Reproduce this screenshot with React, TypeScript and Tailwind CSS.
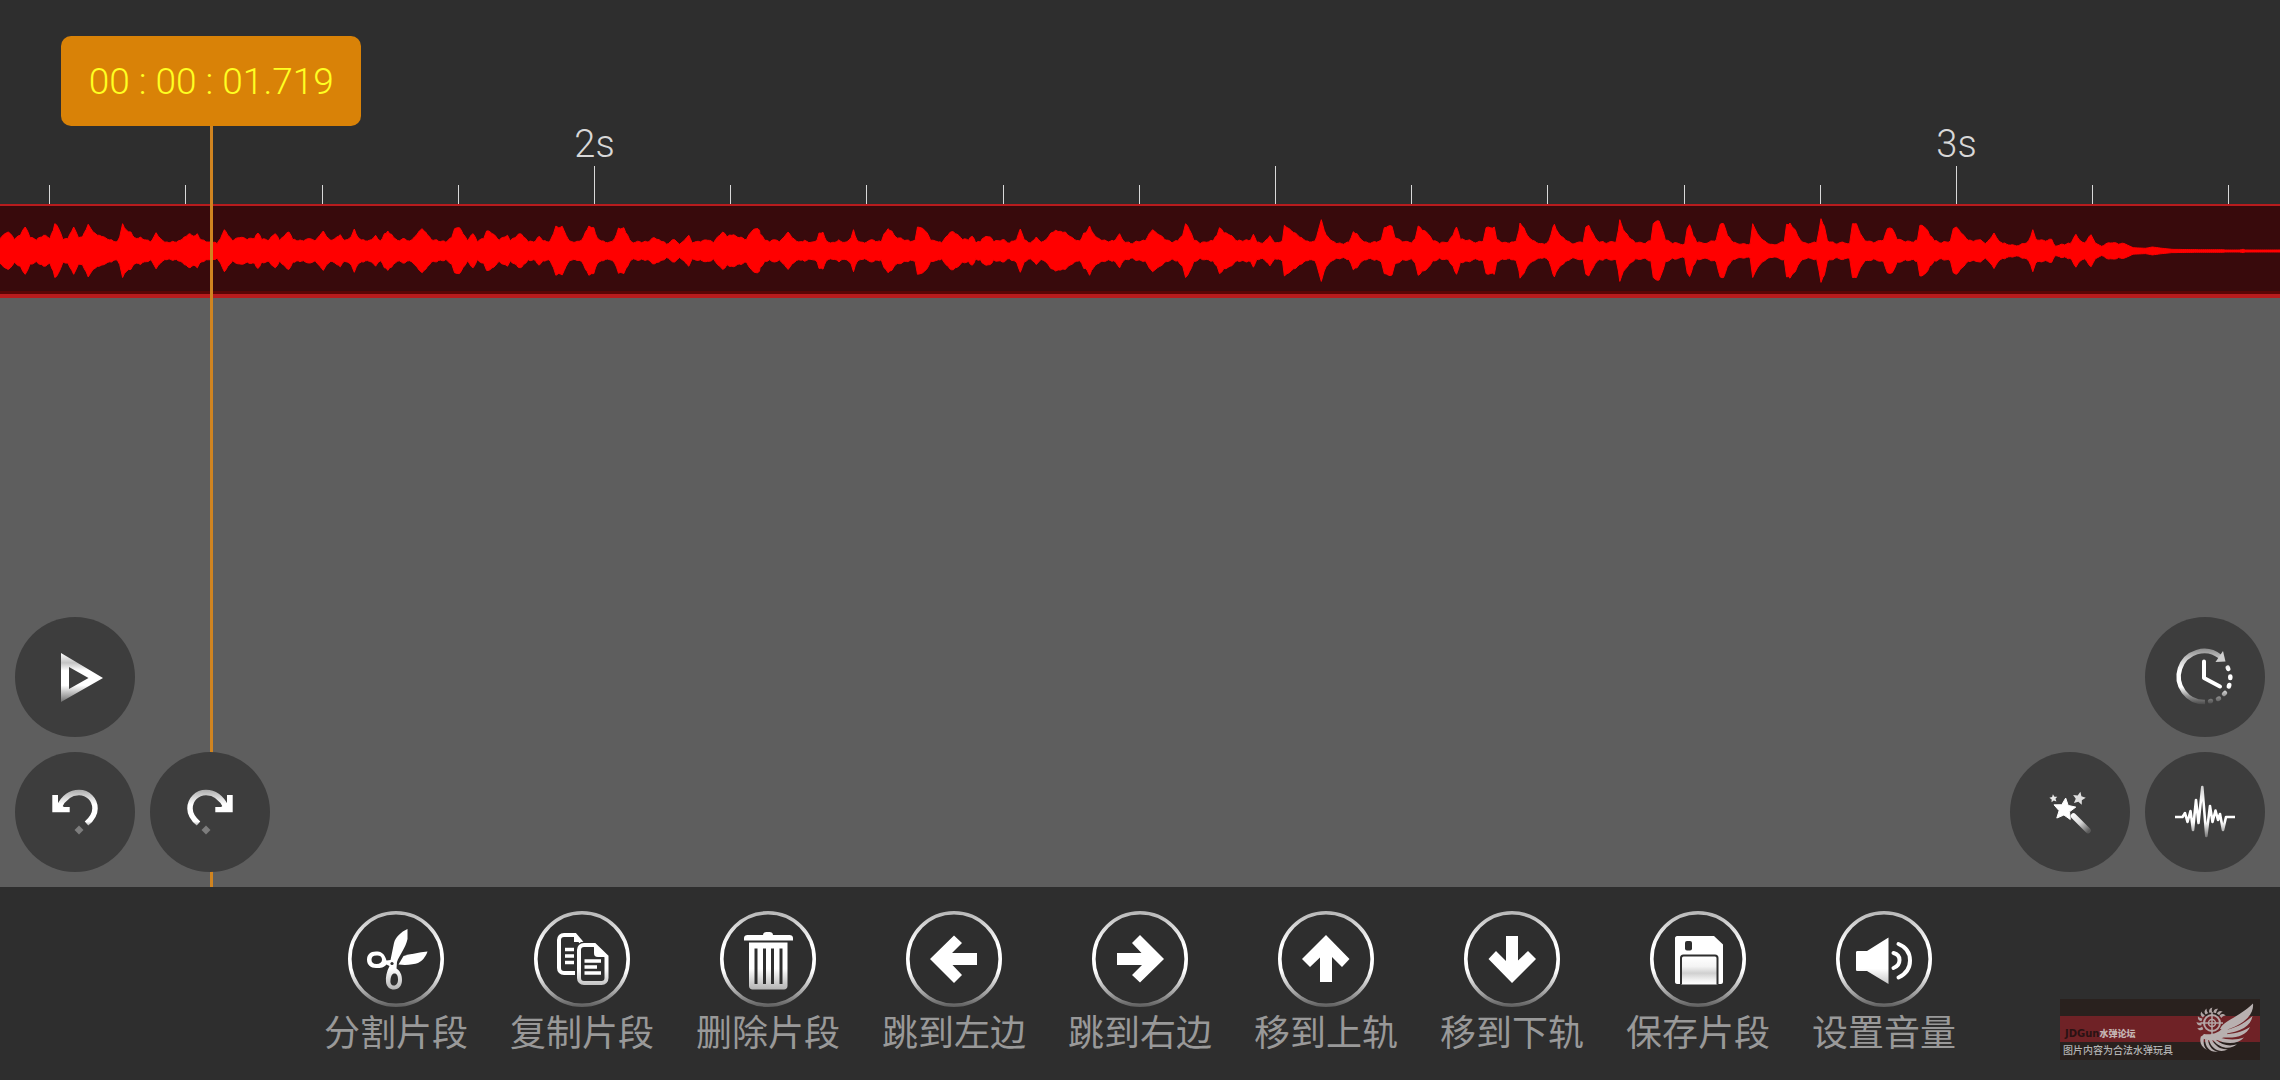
import type { ReactNode } from "react";

const PX_PER_SECOND = 1362;
const VIEW_START = 1.5635;
const VIEW_SPAN = 2280 / PX_PER_SECOND;

const leftOf = (seconds: number) => `${((seconds - VIEW_START) / VIEW_SPAN) * 100}%`;

const TICKS = Array.from({ length: 17 }, (_, i) => 16 + i);

/* Envelope samples in three runs: [x, y] pairs on a 1568-wide strip, zero line at y = 212. */
const RUNS: number[][] = [
  [0,175,17,155,30,178,42,165,52,140,62,172,75,180,90,165,103,175,110,150,113,130,120,142,130,178,140,175,152,140,162,172,170,170,182,132,192,155,205,165,215,170,230,178,240,185,247,170,253,130,260,148,270,155,278,172,290,170,310,185,322,157,335,180,345,185,360,185,372,180,380,170,392,160,400,168,407,160,412,175,425,185,435,185,448,190,455,175,463,148,470,165,480,182,495,172,510,178,525,175,532,158,540,178,555,180,568,160,577,182,588,165,596,155,604,178,615,182,630,178,640,175,650,182,660,165,667,152,674,170,685,180,695,170,702,163,710,180,725,168,731,146,738,170,750,178,762,180,775,165,785,182,793,160,800,152,808,162,820,180,835,175,845,182,855,170,865,152,871,145,878,155,890,178,905,183,920,186,932,172,938,145,948,142,955,160,965,182,976,160,985,185,998,175,1004,152,1015,160,1030,180,1042,170,1047,165,1053,182,1065,170,1073,160,1080,170,1090,185,1105,182,1112,168,1120,182,1135,182,1142,160,1147,137,1153,143,1160,138,1168,165,1175,182,1190,183,1200,180,1208,155,1215,137,1225,142,1232,172,1245,182,1258,185,1268,175,1276,143,1287,142,1295,165,1303,185,1320,184,1335,185,1350,172,1360,178,1375,192,1392,178,1402,192,1412,180,1421,165,1428,188,1445,185,1460,180,1472,188,1485,165,1491,155,1500,170,1510,165,1525,172,1540,178,1550,155,1560,145,1567,150],
  [0,160,10,180,20,185,30,178,40,185,50,170,58,155,66,172,80,185,92,180,105,186,118,178,122,158,130,156,137,182,150,186,163,178,175,186,188,172,193,148,200,178,212,186,235,180,250,185,256,160,264,145,272,152,280,170,295,178,310,184,320,180,325,140,335,144,345,158,352,180,362,182,368,185,375,188,388,165,395,154,403,160,418,178,430,180,438,168,445,188,455,185,462,172,475,170,482,185,500,178,515,188,530,175,537,146,545,178,558,188,570,170,580,186,590,178,600,158,610,150,620,153,630,155,645,172,660,182,668,158,675,152,680,137,688,160,700,175,715,182,730,182,742,160,750,182,765,190,780,184,795,182,803,160,810,148,820,160,835,178,850,188,862,182,872,165,878,130,886,148,895,180,908,190,925,185,935,182,943,165,948,142,957,158,970,165,985,182,1000,180,1012,180,1018,162,1025,186,1040,186,1052,166,1062,188,1078,180,1082,135,1092,145,1105,158,1118,172,1130,182,1145,182,1152,150,1158,118,1164,150,1172,170,1185,185,1200,190,1215,186,1224,154,1232,160,1242,180,1255,188,1272,186,1282,178,1288,142,1304,138,1310,172,1325,185,1345,188,1352,175,1358,137,1366,150,1378,160,1388,182,1402,190,1420,186,1430,165,1437,140,1445,178,1460,180,1480,186,1492,183,1498,142,1515,140,1520,178,1535,186,1550,185,1560,183,1566,150],
  [0,128,8,142,15,165,30,182,50,192,60,180,68,140,71,132,78,155,90,172,105,188,130,188,136,140,142,135,150,158,160,182,175,188,198,186,203,150,206,118,213,148,225,172,238,188,258,190,270,182,275,130,287,122,293,145,300,180,315,190,340,190,345,145,350,133,357,165,365,188,390,186,405,178,413,132,420,130,428,165,440,186,460,190,475,190,480,130,490,160,505,182,520,192,545,186,550,132,557,128,568,148,578,178,590,188,612,188,617,150,621,115,628,138,634,180,650,190,670,188,680,190,686,130,694,130,702,160,712,182,730,188,750,180,758,145,768,145,778,178,795,185,812,186,820,180,825,135,838,145,845,165,855,182,870,188,888,182,894,145,900,140,912,160,925,180,940,180,950,178,960,190,970,175,978,158,988,182,1000,188,1020,195,1040,190,1050,180,1058,148,1064,175,1080,180,1097,177,1105,198,1120,192,1135,190,1147,162,1155,180,1165,188,1178,163,1187,188,1200,198,1218,188,1235,192,1250,192,1265,202,1290,204,1305,200,1325,204,1345,207,1400,208,1450,208,1460,211,1480,210,1492,207,1500,211,1568,211],
];

function buildWaveform() {
  const pts: [number, number][] = [];
  RUNS.forEach((run, r) => {
    for (let i = 0; i < run.length; i += 2) {
      pts.push([r * 760 + (run[i] * 760) / 1568, (212 - run[i + 1]) / 3]);
    }
  });
  // Fill the gaps between samples with a fine ripple, as in a real recording.
  const dense: [number, number][] = [];
  for (let i = 0; i < pts.length - 1; i++) {
    const [x0, h0] = pts[i];
    const [x1, h1] = pts[i + 1];
    const steps = Math.max(1, Math.round((x1 - x0) / 2));
    for (let s = 0; s < steps; s++) {
      const t = s / steps;
      const h = h0 + (h1 - h0) * t;
      const ripple = s === 0 || h < 6 ? 0 : Math.sin((x0 + s * 2) * 12.9898) * 1.1;
      dense.push([x0 + (x1 - x0) * t, Math.max(1, h + ripple)]);
    }
  }
  dense.push([2280, 1]);
  const top = dense.map(([x, h]) => `${x.toFixed(1)} ${(45 - h).toFixed(1)}`);
  const bottom = [...dense].reverse().map(([x, h]) => `${x.toFixed(1)} ${(45 + h * 0.97).toFixed(1)}`);
  return `M${top.join("L")}L${bottom.join("L")}Z`;
}

const WAVEFORM = buildWaveform();

function starPath(cx: number, cy: number, r: number, turn: number) {
  const p = Array.from({ length: 10 }, (_, i) => {
    const a = ((i * 36 - 90 + turn) * Math.PI) / 180;
    const d = i % 2 ? r * 0.48 : r;
    return `${(cx + d * Math.cos(a)).toFixed(2)} ${(cy + d * Math.sin(a)).toFixed(2)}`;
  });
  return `M${p.join("L")}Z`;
}

function Gradients() {
  return (
    <svg className="absolute size-0" aria-hidden="true">
      <defs>
        <linearGradient id="ring" x1="0" y1="0" x2="0" y2="96" gradientUnits="userSpaceOnUse">
          <stop offset="0" stopColor="#b4b4b4" />
          <stop offset="0.12" stopColor="#cfcfcf" />
          <stop offset="0.35" stopColor="#ffffff" />
          <stop offset="0.62" stopColor="#ffffff" />
          <stop offset="0.86" stopColor="#a0a0a0" />
          <stop offset="1" stopColor="#5c5c5c" />
        </linearGradient>
        <linearGradient id="glyph" x1="0" y1="20" x2="0" y2="78" gradientUnits="userSpaceOnUse">
          <stop offset="0" stopColor="#ffffff" />
          <stop offset="0.65" stopColor="#ffffff" />
          <stop offset="1" stopColor="#b4b4b4" />
        </linearGradient>
        <linearGradient id="play" x1="0" y1="36" x2="0" y2="85" gradientUnits="userSpaceOnUse">
          <stop offset="0" stopColor="#ffffff" />
          <stop offset="0.2" stopColor="#c4c4c4" />
          <stop offset="0.36" stopColor="#ffffff" />
          <stop offset="0.66" stopColor="#ffffff" />
          <stop offset="1" stopColor="#6e6e6e" />
        </linearGradient>
        <linearGradient id="turn" x1="0" y1="37" x2="0" y2="82" gradientUnits="userSpaceOnUse">
          <stop offset="0" stopColor="#a8a8a8" />
          <stop offset="0.14" stopColor="#cccccc" />
          <stop offset="0.34" stopColor="#ffffff" />
          <stop offset="0.72" stopColor="#ffffff" />
          <stop offset="0.84" stopColor="#9a9a9a" />
          <stop offset="1" stopColor="#707070" />
        </linearGradient>
        <linearGradient id="clock" x1="0" y1="32" x2="0" y2="88" gradientUnits="userSpaceOnUse">
          <stop offset="0" stopColor="#8f8f8f" />
          <stop offset="0.2" stopColor="#cfcfcf" />
          <stop offset="0.38" stopColor="#ffffff" />
          <stop offset="0.68" stopColor="#ffffff" />
          <stop offset="0.85" stopColor="#8c8c8c" />
          <stop offset="1" stopColor="#444444" />
        </linearGradient>
        <linearGradient id="handle" x1="62" y1="62" x2="79" y2="79" gradientUnits="userSpaceOnUse">
          <stop offset="0" stopColor="#ffffff" />
          <stop offset="0.5" stopColor="#d8d8d8" />
          <stop offset="1" stopColor="#5a5a5a" />
        </linearGradient>
        <linearGradient id="pulse" x1="0" y1="35" x2="0" y2="85" gradientUnits="userSpaceOnUse">
          <stop offset="0" stopColor="#cfcfcf" />
          <stop offset="0.3" stopColor="#ffffff" />
          <stop offset="0.7" stopColor="#ffffff" />
          <stop offset="1" stopColor="#777777" />
        </linearGradient>
        <linearGradient id="label" x1="0" y1="46" x2="0" y2="73" gradientUnits="userSpaceOnUse">
          <stop offset="0" stopColor="#ffffff" />
          <stop offset="0.35" stopColor="#f4f4f4" />
          <stop offset="0.6" stopColor="#d0d0d0" />
          <stop offset="0.85" stopColor="#f2f2f2" />
          <stop offset="1" stopColor="#ffffff" />
        </linearGradient>
      </defs>
    </svg>
  );
}

function RoundButton({ name, children }: { name: string; children: ReactNode }) {
  return (
    <button type="button" aria-label={name} className="size-[120px] cursor-pointer rounded-full bg-[#3d3d3d]">
      <svg viewBox="0 0 120 120" className="size-full" fill="none" aria-hidden="true">
        {children}
      </svg>
    </button>
  );
}

const undoShape = (
  <>
    <path d="M44 55C49 45 56 40.500 64 40.500C73 40.500 80 47.500 80 56.500C80 62 77.500 66.500 71.500 71.500" stroke="url(#turn)" strokeWidth="5.500" />
    <path d="M37.300 43H43V51L49 55H54.700V60.200H37.300Z" fill="#fff" />
    <path d="M64 73.500L68.500 78L64 82.500L59.500 78Z" fill="#7d7d7d" />
  </>
);

const arrowShape = <path d="M24 48L48 24.500L56 32L46 42H71V54H46.500L56 64L48 72Z" fill="#fff" />;

const TOOLS: { label: string; icon: ReactNode }[] = [
  {
    label: "分割片段",
    icon: (
      <>
        <path
          d="M59.500 18C53 21 47.500 26 46 32L42.500 49L38.500 49.500C36.500 42 32.500 40.500 28 40.500C22 40.500 19 44 19 48.500C19 54 22.500 57 28 57C33 57 36 56.500 38.500 53.500L41.500 55C38.500 61 37.500 66 38 71C38.500 76 42 78.500 46 78.500C51 78.500 54 74.500 54 69C54 63.500 52 60 48.500 57.500L49 51C51 45 58 36 59.500 28ZM28.500 44.500C32.500 44.500 34 46 34 48.800C34 51.500 32 53 28.500 53C25 53 23.500 51.500 23.500 48.800C23.500 46 25 44.500 28.500 44.500ZM46.500 62.500C49 62.500 50 65 50 68.500C50 72 48.500 74.500 46 74.500C43.500 74.500 42 72.500 42.500 69C43 65 44 62.500 46.500 62.500Z"
          fill="url(#glyph)"
          fillRule="evenodd"
        />
        <path d="M79.500 40.500C71 41.500 62 43 55.500 45L50.500 53.500C58 54.500 66 53.500 70 52C74.500 50 78 45 79.500 40.500Z" fill="#fff" />
        <circle cx="44" cy="52.500" r="1.600" fill="#2e2e2e" />
      </>
    ),
  },
  {
    label: "复制片段",
    icon: (
      <>
        <path d="M41 62H30C27 62 25 60 25 57V29C25 26 27 24 30 24H41L47 31" stroke="#fff" strokeWidth="4" />
        <path d="M40 22L49.500 31H40Z" fill="#fff" />
        <path d="M31 38.500H40M31 45H40M31 51.500H40" stroke="#fff" strokeWidth="3.500" />
        <path d="M50 34H60.500L72.500 45.500V67C72.500 70 70.500 72 67.500 72H50C47 72 45 70 45 67V39C45 36 47 34 50 34Z" stroke="url(#glyph)" strokeWidth="4" />
        <path d="M60 33L74 46H64C61 46 60 44.500 60 42Z" fill="#fff" />
        <path d="M50.500 50H67M50.500 56H63M50.500 62H67" stroke="#fff" strokeWidth="3.500" />
      </>
    ),
  },
  {
    label: "删除片段",
    icon: (
      <>
        <path d="M24 29.500V27C24 25 25.500 24 27.500 24H43C43 22 44.500 21 46.500 21H49.500C51.500 21 53 22 53 24H69.500C71.500 24 73 25 73 27V29.500Z" fill="#fff" />
        <path
          d="M29 31.500H67.500V75C67.500 77 66 78.500 64 78.500H32.500C30.500 78.500 29 77 29 75ZM34.500 37.500V73H37.500V37.500ZM43 37.500V73H46V37.500ZM51 37.500V73H54V37.500ZM59.500 37.500V73H62.500V37.500Z"
          fill="url(#glyph)"
          fillRule="evenodd"
        />
      </>
    ),
  },
  { label: "跳到左边", icon: arrowShape },
  { label: "跳到右边", icon: <g transform="rotate(180 48 48)">{arrowShape}</g> },
  { label: "移到上轨", icon: <g transform="rotate(90 48 48)">{arrowShape}</g> },
  { label: "移到下轨", icon: <g transform="rotate(-90 48 48)">{arrowShape}</g> },
  {
    label: "保存片段",
    icon: (
      <>
        <path d="M27 25H64L73 33.500V71C73 72 72 73 71 73H27C26 73 25 72 25 71V27C25 26 26 25 27 25Z" fill="#fff" />
        <rect x="35" y="30" width="7" height="9.500" rx="2" fill="#2e2e2e" />
        <path d="M31 73.500V47C31 45.500 32 44.500 33.500 44.500H65C66.500 44.500 67.500 45.500 67.500 47V73.500" fill="url(#label)" stroke="#2e2e2e" strokeWidth="2" />
      </>
    ),
  },
  {
    label: "设置音量",
    icon: (
      <>
        <path d="M21.500 40H31L52.500 26.500V73L31 60H21.500C20.500 60 20 59.500 20 58.500V41.500C20 40.500 20.500 40 21.500 40Z" fill="url(#glyph)" />
        <path d="M57.500 42C61.500 43 63.500 45.500 63.500 49C63.500 52.500 61.500 55.500 57.500 57" stroke="#fff" strokeWidth="4" strokeLinecap="round" />
        <path d="M62.500 33C70 36 74 42 74 49.500C74 57 70 63 62.500 66.500" stroke="#fff" strokeWidth="4" strokeLinecap="round" />
      </>
    ),
  },
];

function Ruler() {
  return (
    <div className="relative h-[204px] w-full overflow-hidden">
      {TICKS.map((n) => (
        <div
          key={n}
          className="absolute bottom-0 flex w-0 flex-col items-center"
          style={{ left: leftOf(n / 10) }}
        >
          {n % 10 === 0 && <span className="text-[38px] leading-[44px] font-[350] whitespace-nowrap text-[#d8d8d8]">{n / 10}s</span>}
          <span className={n % 5 === 0 ? "h-[38px] w-px bg-[#d8d8d8]" : "h-[19px] w-px bg-[#d8d8d8]"} />
        </div>
      ))}
    </div>
  );
}

function Track() {
  return (
    <div className="h-[94px] w-full border-t-2 border-b-4 border-[#b81c1e] bg-[#380a0c]">
      <svg viewBox="0 0 2280 88" preserveAspectRatio="none" className="block h-full w-full" aria-label="音频波形">
        <path d={WAVEFORM} fill="#ff0000" stroke="#ff0000" strokeWidth="1" />
        <path d="M0 86.500H2280" stroke="#5a0606" strokeWidth="3" />
      </svg>
    </div>
  );
}

function Playhead() {
  return (
    <div
      className="pointer-events-none absolute top-9 bottom-0 flex w-0 flex-col items-center"
      style={{ left: leftOf(1.7186) }}
    >
      <div className="flex h-[90px] w-[300px] shrink-0 items-center justify-center rounded-[10px] bg-[#d98207] pt-0.5">
        <time className="text-[37px] leading-[44px] font-[350] whitespace-nowrap text-[#ffff22]">00 : 00 : 01.719</time>
      </div>
      <div className="w-[3px] flex-1 bg-[#d08420]" />
    </div>
  );
}

const FEATHERS = [
  "M160 30C164 21 178 19 193 4.500C194 13 188 24 166 31Z",
  "M163 32C175 29 184 25 192.500 17C191 27 181 33 163 35Z",
  "M162 35.500C174 35 182 33 190 28C186 37 175 40 160 38Z",
  "M159 38.500C168 41 177 41 184 38.500C178 45 167 46 156 40.500Z",
  "M156 41C162 46 170 48 177 45C171 51 160 50 153 41Z",
  "M152 41C156 48 162 51 168 50C162 54 152 52 149 41Z",
  "M148 41C149 48 153 52 158 52.500C151 54 145 49 145 40Z",
  "M144 39C143 44 144 48 147 51C141 48 139 43 141 37Z",
];

const WING_BODY = "M164 27C160 34 152 36 144 35L141 38C146 43 158 43 167 36L168 29Z";

/* Curved teeth round the left and top of the target, in degrees. */
const TEETH = [-115, -92, -70, -48, -26, -4, 18, 38, 56];

function Watermark() {
  return (
    <div className="absolute right-5 bottom-5 flex h-[61px] w-[200px] flex-col bg-[#29211e]">
      <div className="mt-[17px] flex h-[26px] items-end bg-[#6f2226] pb-px pl-[5px] text-[9px] leading-[14px]">
        <span className="font-['DejaVu_Sans'] text-[10px] font-bold text-[#2a1213]">JDGun</span>
        <span className="font-black text-[#c4b4b2]">水弹论坛</span>
      </div>
      <p className="pl-[3px] text-[10px] leading-[17px] font-medium whitespace-nowrap text-[#b4b4b4]">图片内容为合法水弹玩具</p>
      <svg viewBox="0 0 200 61" className="absolute inset-0 size-full" fill="none" aria-hidden="true">
        <g stroke="#b4a6a6">
          <circle cx="152" cy="24" r="8" strokeWidth="2" />
          <circle cx="152" cy="24" r="3.500" strokeWidth="1.500" />
          <path d="M152 13V35M141 24H163" strokeWidth="1.500" />
        </g>
        <g fill="#b0a4a4">
          {TEETH.map((a) => (
            <path key={a} d="M150 13.500C149.500 11 150.500 9 153.500 8.500C152.500 10 152.500 12 153 13.500Z" transform={`rotate(${a} 152 24)`} />
          ))}
        </g>
        <path d={WING_BODY} fill="#b8b0b0" />
        <path d={FEATHERS.join("")} fill="#b8b0b0" />
      </svg>
    </div>
  );
}

export default function App() {
  return (
    <div className="flex min-h-screen w-full flex-col overflow-hidden bg-[#2e2e2e] font-['Roboto','Noto_Sans_CJK_SC',sans-serif]">
      <Gradients />
      <main className="relative flex flex-1 flex-col">
        <Ruler />
        <Track />
        <div className="flex-1 bg-[#5e5e5e]" />
        <Playhead />
        <div className="absolute inset-x-0 bottom-0 flex items-end justify-between p-[15px]">
          <div className="grid grid-cols-2 gap-[15px]">
            <div className="col-span-2 flex">
              <RoundButton name="播放">
                <path d="M46 36L88 61L46 85ZM54 50V72L73.500 61Z" fill="url(#play)" fillRule="evenodd" />
              </RoundButton>
            </div>
            <RoundButton name="撤销">{undoShape}</RoundButton>
            <RoundButton name="重做">
              <g transform="translate(120 0) scale(-1 1)">{undoShape}</g>
            </RoundButton>
          </div>
          <div className="grid grid-cols-2 gap-[15px]">
            <div className="col-span-2 flex justify-end">
              <RoundButton name="定时">
                <path d="M60 85A25.500 25.500 0 1 1 75 39.500" stroke="url(#clock)" strokeWidth="4.500" />
                <path d="M78 34L80.500 44.500L70.500 45Z" fill="#cfcfcf" />
                <path d="M59 44.500V61L75 69.500" stroke="#fff" strokeWidth="4" strokeLinecap="round" strokeLinejoin="round" />
                <g stroke="url(#clock)" strokeWidth="4.500" strokeLinecap="round">
                  <path d="M82.700 50.500L83.300 52M85.300 59.500V61M84.300 68L83.800 69.500M80 76L79 77M74 81.500L73 82M66 84L65 84.200" />
                </g>
              </RoundButton>
            </div>
            <RoundButton name="特效">
              <path d={starPath(54.500, 57.500, 11.500, 6)} fill="#fff" stroke="#fff" strokeWidth="1" strokeLinejoin="round" />
              <path d={starPath(69, 46.500, 6.800, 12)} fill="#dedede" />
              <path d={starPath(43.500, 46.500, 4.200, -8)} fill="#e8e8e8" />
              <path d="M63.500 64L78 78.500" stroke="url(#handle)" strokeWidth="5.500" strokeLinecap="round" />
            </RoundButton>
            <RoundButton name="波形">
              <path
                d="M30 65H37.500L40 61L42.500 70L45.500 59L48 78L51 48L53.500 71L57.300 35L61.300 84L65 54L67.500 70L70.500 58.500L73 68L75 62L78 78L81 65H90"
                stroke="url(#pulse)"
                strokeWidth="2.600"
                strokeLinejoin="round"
              />
            </RoundButton>
          </div>
        </div>
      </main>
      <footer className="relative flex h-[193px] justify-center pt-6">
        {TOOLS.map(({ label, icon }) => (
          <button key={label} type="button" className="flex w-[186px] cursor-pointer flex-col items-center">
            <svg viewBox="0 0 96 96" className="size-24 shrink-0" fill="none" aria-hidden="true">
              <circle cx="48" cy="48" r="46.200" stroke="url(#ring)" strokeWidth="3.600" />
              {icon}
            </svg>
            <span className="text-[36px] leading-[54px] font-normal text-[#999999]">{label}</span>
          </button>
        ))}
        <Watermark />
      </footer>
    </div>
  );
}
